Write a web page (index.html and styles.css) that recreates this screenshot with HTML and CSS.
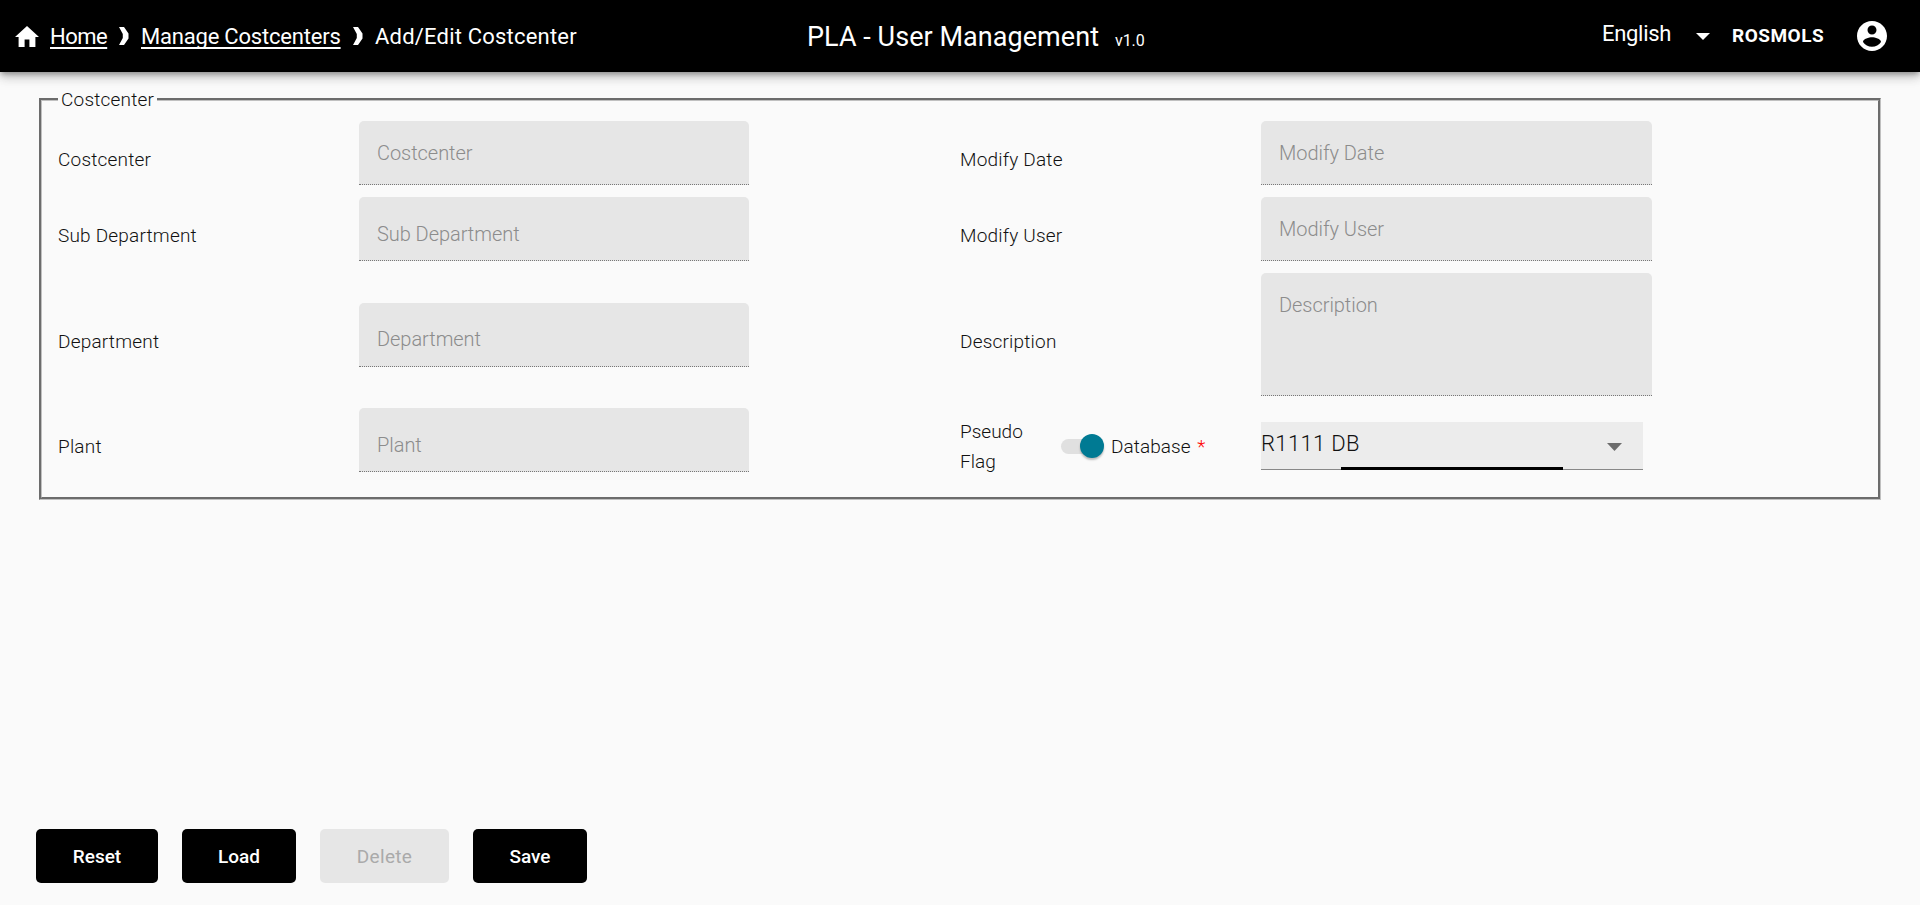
FILE: index.html
```html
<!DOCTYPE html>
<html lang="en">
<head>
<meta charset="utf-8">
<title>PLA - User Management</title>
<link rel="stylesheet" href="styles.css">
</head>
<body>
<header class="toolbar">
  <nav class="crumbs">
    <svg class="home-icon" viewBox="2 3 20 17" preserveAspectRatio="none"><path d="M10 20v-6h4v6h5v-8h3L12 3 2 12h3v8z"/></svg>
    <a class="crumb home" href="#">Home</a>
    <svg class="chevron" viewBox="0 0 10 18"><path d="M0 0H5L9.5 6.500V11.500L5 18H0L3.800 11V7Z"/></svg>
    <a class="crumb manage" href="#">Manage Costcenters</a>
    <svg class="chevron" viewBox="0 0 10 18"><path d="M0 0H5L9.5 6.500V11.500L5 18H0L3.800 11V7Z"/></svg>
    <span class="crumb current">Add/Edit Costcenter</span>
  </nav>
  <div class="title"><h1 class="app-name">PLA - User Management</h1><span class="version">v1.0</span></div>
  <div class="account">
    <span class="language">English</span>
    <svg class="lang-arrow" viewBox="0 0 14 7"><path d="M0 0h14L7 7z"/></svg>
    <span class="user">ROSMOLS</span>
    <svg class="avatar" viewBox="2 2 20 20"><path d="M12 2C6.480 2 2 6.480 2 12s4.480 10 10 10 10-4.480 10-10S17.520 2 12 2zm0 3c1.660 0 3 1.340 3 3s-1.340 3-3 3-3-1.340-3-3 1.340-3 3-3zm0 14.200c-2.500 0-4.710-1.280-6-3.220.03-1.990 4-3.080 6-3.080 1.990 0 5.970 1.090 6 3.080-1.290 1.940-3.500 3.220-6 3.220z"/></svg>
  </div>
</header>
<main class="content">
  <fieldset class="panel">
    <legend class="legend">Costcenter</legend>
    <div class="form">
      <label class="label">Costcenter</label>
      <div class="cell"><div class="field">Costcenter</div></div>
      <label class="label">Modify Date</label>
      <div class="cell"><div class="field wide">Modify Date</div></div>

      <label class="label">Sub Department</label>
      <div class="cell"><div class="field lookup">Sub Department</div></div>
      <label class="label">Modify User</label>
      <div class="cell"><div class="field wide">Modify User</div></div>

      <label class="label">Department</label>
      <div class="cell"><div class="field lookup department">Department</div></div>
      <label class="label">Description</label>
      <div class="cell"><div class="field wide area">Description</div></div>

      <label class="label">Plant</label>
      <div class="cell"><div class="field lookup">Plant</div></div>
      <div class="flags">
        <label class="label flag-label">Pseudo Flag</label>
        <div class="toggle"><div class="thumb"></div></div>
        <label class="label database">Database <span class="required">*</span></label>
      </div>
      <div class="cell">
        <div class="select">
          <span class="value">R1111 DB</span>
          <svg class="select-arrow" viewBox="0 0 14 7" preserveAspectRatio="none"><path d="M0 0h14L7 7z"/></svg>
          <div class="ripple"></div>
        </div>
      </div>
    </div>
  </fieldset>
</main>
<footer class="actions">
  <button class="btn reset">Reset</button>
  <button class="btn load">Load</button>
  <button class="btn delete" disabled>Delete</button>
  <button class="btn save">Save</button>
</footer>
</body>
</html>
```
FILE: styles.css
```css
* { box-sizing: border-box; }
body {
  margin: 0;
  height: 905px;
  display: flex;
  flex-direction: column;
  background: #fafafa;
  color: #111;
  font-family: Roboto, "Liberation Sans", sans-serif;
  font-weight: 300;
  overflow: hidden;
}
svg { display: block; flex: none; fill: currentColor; }

.toolbar {
  height: 72px;
  flex: none;
  display: grid;
  grid-template-columns: 807px 1fr 318px;
  align-items: center;
  background: #000;
  color: #fff;
  font-size: 22px;
  font-weight: 400;
  white-space: nowrap;
  box-shadow: 0 3px 5px -1px rgba(0,0,0,.3), 0 6px 10px rgba(0,0,0,.14), 0 1px 14px rgba(0,0,0,.12);
}
.crumbs { display: flex; align-items: center; padding-left: 15px; }
.home-icon { width: 24px; height: 21px; margin-right: 11px; }
.crumb { color: #fff; text-underline-offset: 3px; text-decoration-thickness: 2px; text-decoration-skip-ink: none; }
.home { width: 57px; letter-spacing: -.5px; }
.manage { width: 200px; letter-spacing: -.2px; }
.current { letter-spacing: .2px; }
.chevron { width: 10px; height: 18px; margin: 0 12px; }
.title { display: flex; align-items: baseline; padding-top: 1px; }
.app-name { width: 308px; margin: 0; font-size: 27px; font-weight: 400; letter-spacing: .05px; }
.version { font-size: 16px; letter-spacing: -.1px; }
.account { display: flex; align-items: center; }
.language { width: 94px; padding-bottom: 5px; letter-spacing: -.3px; }
.lang-arrow { width: 14px; height: 7px; margin-right: 22px; }
.user { width: 125px; padding-bottom: 1px; font-size: 19px; font-weight: 700; letter-spacing: .5px; }
.avatar { width: 30px; height: 30px; }

.content { flex: 1; padding: 15px 39px 0; }
.panel { margin: 0; padding: 0 0 13px 16px; border: 3px groove #c0c0c0; }
.legend { padding: 0 3px; font-size: 19px; line-height: 25px; letter-spacing: .2px; }
.form {
  display: grid;
  grid-template-columns: 301px 601px 301px 1fr;
  grid-template-rows: 76px 76px 135px 76px;
  align-items: center;
  padding-top: 9px;
}
.label { padding-top: 2px; font-size: 19px; line-height: 30px; letter-spacing: .2px; }
.field {
  width: 390px;
  height: 64px;
  margin-bottom: 12px;
  padding: 17px 18px;
  border-bottom: 1px dotted #777;
  border-radius: 5px 5px 0 0;
  background: #e6e6e6;
  color: #8c8c8c;
  font-size: 20px;
  line-height: 30px;
  letter-spacing: -.05px;
}
.wide { width: 391px; }
.lookup { padding-top: 22px; }
.department { padding-top: 21px; }
.area { height: 123px; }
.flags { display: flex; align-items: center; }
.flag-label { width: 101px; padding-right: 35px; letter-spacing: 0; }
.database { letter-spacing: .05px; }
.toggle { width: 39px; height: 15px; margin-right: 11px; border-radius: 8px; background: #e0e0e0; }
.thumb {
  width: 24px;
  height: 24px;
  margin: -5px 0 0 19px;
  border-radius: 50%;
  background: #007a93;
  box-shadow: 0 2px 2px rgba(0,0,0,.25);
}
.required { margin-left: 2px; color: #f00; }
.select {
  position: relative;
  display: flex;
  align-items: center;
  justify-content: space-between;
  width: 382px;
  height: 48px;
  padding-right: 21px;
  border-bottom: 1px solid #888;
  background: #ececec;
}
.value { padding-bottom: 5px; font-size: 22px; letter-spacing: .35px; }
.select-arrow { width: 15px; height: 8px; margin-top: 2px; color: #6d6d6d; }
.ripple { position: absolute; left: 80px; bottom: -1px; width: 222px; height: 3px; background: #000; }

.actions { display: flex; gap: 24px; flex: none; padding: 0 36px 22px; }
.btn {
  height: 54px;
  padding: 0;
  border: 0;
  border-radius: 5px;
  background: #000;
  color: #fff;
  font-family: inherit;
  font-size: 19px;
  font-weight: 500;
}
.reset { width: 122px; }
.load, .save { width: 114px; }
.delete { width: 129px; background: #e6e6e6; color: #aaa; font-weight: 400; letter-spacing: .3px; }
```
